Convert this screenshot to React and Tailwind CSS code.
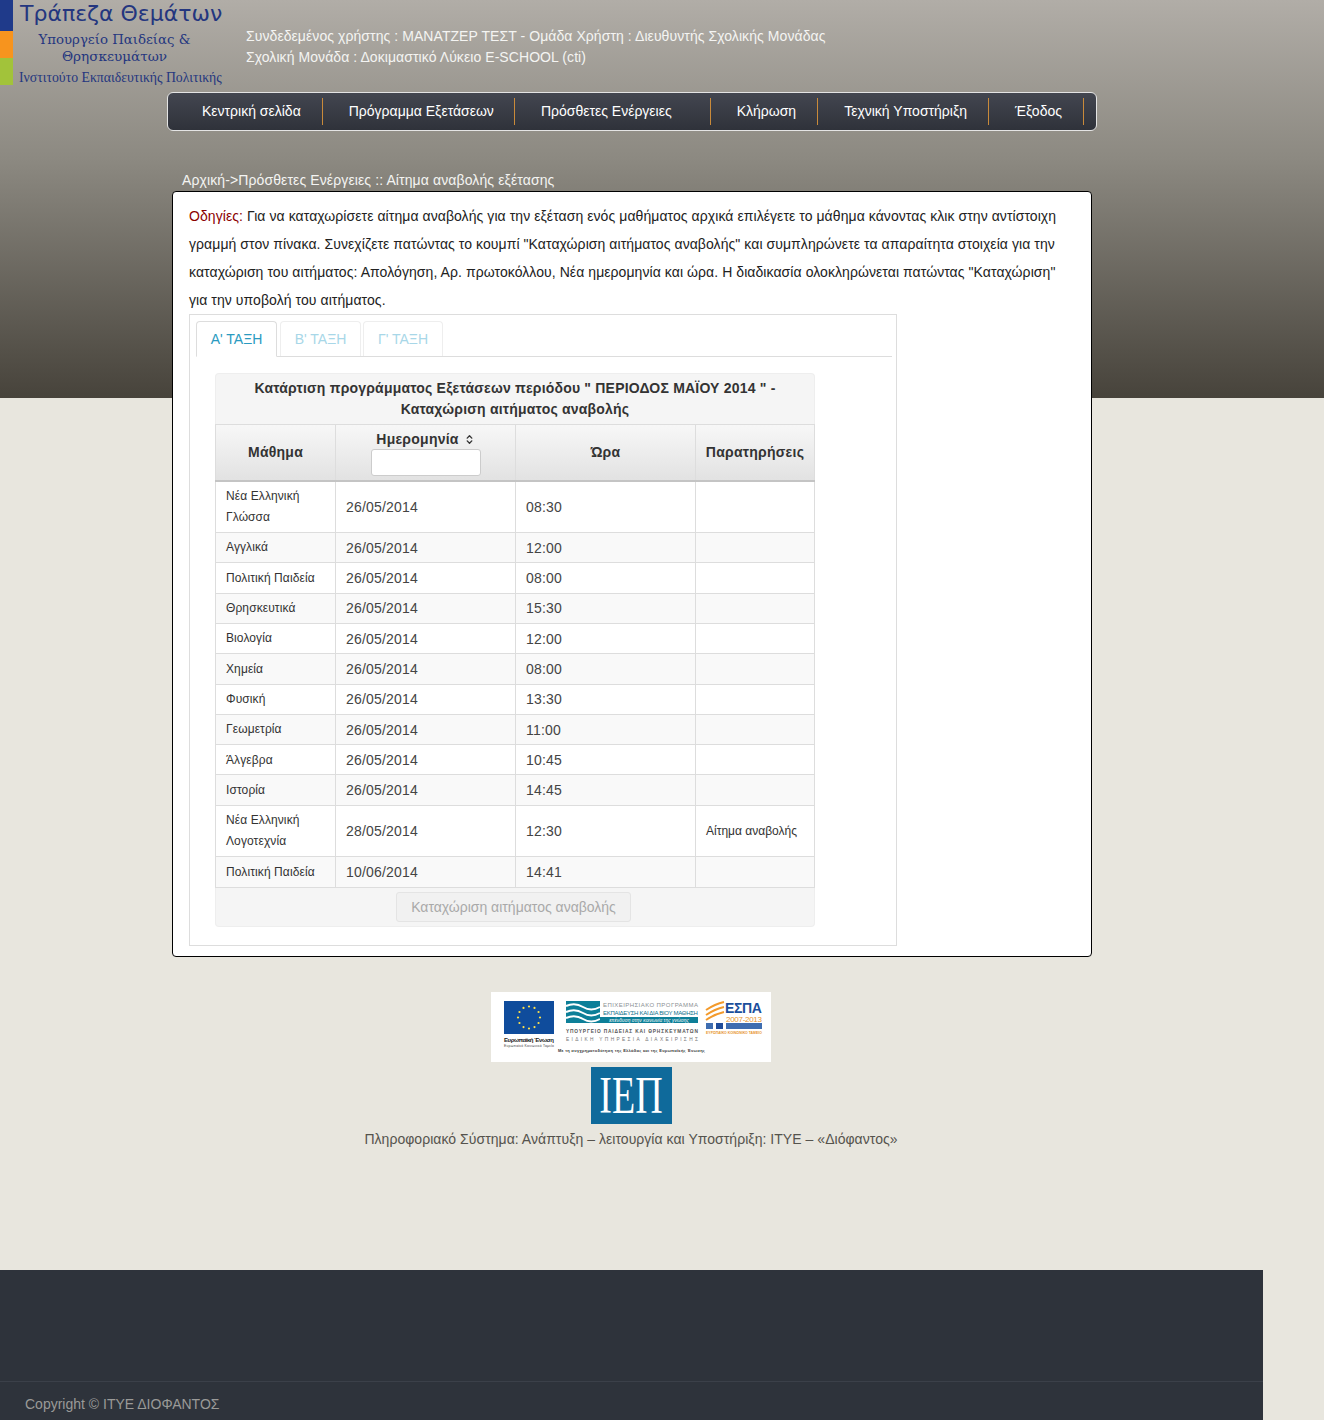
import React from "react";
import { ChevronsUpDown } from "lucide-react";

const navItems = [
  { label: "Κεντρική σελίδα", cls: "pr-[21px]" },
  { label: "Πρόγραμμα Εξετάσεων", cls: "pr-[20px]" },
  { label: "Πρόσθετες Ενέργειες", cls: "pr-[38px]" },
  { label: "Κλήρωση", cls: "pr-[21px]" },
  { label: "Τεχνική Υποστήριξη", cls: "pr-[21px]" },
  { label: "Έξοδος", cls: "pr-[21px]" },
];

// row heights and the 1px nudges keep the rounding of the original's 30.33px rows
const rows = [
  { subject: ["Νέα Ελληνική", "Γλώσσα"], date: "26/05/2014", time: "08:30", h: "h-[51px]", sub: "pt-0", val: "pt-[2px]" },
  { subject: ["Αγγλικά"], date: "26/05/2014", time: "12:00", h: "h-[30px]", sub: "pt-0", val: "pt-[2px]" },
  { subject: ["Πολιτική Παιδεία"], date: "26/05/2014", time: "08:00", h: "h-[31px]", sub: "pt-[2px]", val: "pt-[2px]" },
  { subject: ["Θρησκευτικά"], date: "26/05/2014", time: "15:30", h: "h-[30px]", sub: "pt-0", val: "pt-0" },
  { subject: ["Βιολογία"], date: "26/05/2014", time: "12:00", h: "h-[30px]", sub: "pt-0", val: "pt-[2px]" },
  { subject: ["Χημεία"], date: "26/05/2014", time: "08:00", h: "h-[31px]", sub: "pt-[2px]", val: "pt-[2px]" },
  { subject: ["Φυσική"], date: "26/05/2014", time: "13:30", h: "h-[30px]", sub: "pt-0", val: "pt-0" },
  { subject: ["Γεωμετρία"], date: "26/05/2014", time: "11:00", h: "h-[30px]", sub: "pt-0", val: "pt-[2px]" },
  { subject: ["Άλγεβρα"], date: "26/05/2014", time: "10:45", h: "h-[30px]", sub: "pt-[2px]", val: "pt-[2px]" },
  { subject: ["Ιστορία"], date: "26/05/2014", time: "14:45", h: "h-[31px]", sub: "pt-[2px]", val: "pt-[2px]" },
  { subject: ["Νέα Ελληνική", "Λογοτεχνία"], date: "28/05/2014", time: "12:30", note: "Αίτημα αναβολής", h: "h-[51px]", sub: "pt-0", val: "pt-[2px]" },
  { subject: ["Πολιτική Παιδεία"], date: "10/06/2014", time: "14:41", h: "h-[31px]", sub: "pt-[2px]", val: "pt-[2px]" },
];

const Logo = () => (
  <div className="flex w-[246px] h-[85px] shrink-0">
    <div className="flex flex-col w-[13px] h-[85px] shrink-0">
      <div className="h-[31px] bg-[#1f3a8a]"></div>
      <div className="h-[27px] bg-[#f7941e]"></div>
      <div className="h-[27px] bg-[#a2c33a]"></div>
    </div>
    <div className="w-[209px] pl-[6px] text-[#24367f] text-center whitespace-nowrap tracking-normal">
      <div className="h-[31px] pl-[1px] text-[22px] leading-[28px] font-['DejaVu_Sans',sans-serif] text-left">Τράπεζα Θεμάτων</div>
      <div className="h-[17px] text-[13.3px] leading-[17px] font-['DejaVu_Serif',serif] pr-[12px]">Υπουργείο Παιδείας &</div>
      <div className="h-[17px] text-[13.6px] leading-[17px] font-['DejaVu_Serif',serif] pr-[12px]">Θρησκευμάτων</div>
      <div className="h-[20px] pt-[3px] text-[13.75px] leading-[20px] font-['Liberation_Serif',serif] text-left">Ινστιτούτο Εκπαιδευτικής Πολιτικής</div>
    </div>
  </div>
);

const EuBanner = () => {
  const stars = Array.from({ length: 12 }, (_, i) => {
    const a = (i * Math.PI) / 6;
    return [25 + 11 * Math.cos(a), 16.5 + 11 * Math.sin(a)];
  });
  return (
    <svg width="280" height="70" viewBox="0 0 280 70" className="block">
      <rect width="280" height="70" fill="#ffffff" />
      <g transform="translate(13,9)">
        <rect width="50" height="33" fill="#0f4c9c" />
        {stars.map(([x, y], i) => (
          <circle key={i} cx={x} cy={y} r="1.1" fill="#ffe24a" />
        ))}
      </g>
      <text x="13" y="50" fontSize="6" fontWeight="700" fill="#222" fontFamily="Liberation Sans" textLength="50">Ευρωπαϊκή Ένωση</text>
      <text x="13" y="55" fontSize="3.4" fill="#444" fontFamily="Liberation Sans" textLength="50">Ευρωπαϊκό Κοινωνικό Ταμείο</text>

      <rect x="75" y="9" width="34" height="22" fill="#0d7f98" />
      <path d="M75 14 Q84 10 92 15 T109 15 M75 20 Q84 16 92 21 T109 21 M75 26 Q84 22 92 27 T109 27" stroke="#ffffff" strokeWidth="2" fill="none" />
      <text x="112" y="15" fontSize="6" fill="#8a8f93" fontFamily="Liberation Sans" textLength="95">ΕΠΙΧΕΙΡΗΣΙΑΚΟ ΠΡΟΓΡΑΜΜΑ</text>
      <text x="112" y="23" fontSize="6" fill="#0d6f8c" fontFamily="Liberation Sans" textLength="95">ΕΚΠΑΙΔΕΥΣΗ ΚΑΙ ΔΙΑ ΒΙΟΥ ΜΑΘΗΣΗ</text>
      <rect x="109" y="25" width="98" height="6" fill="#0d7f98" />
      <text x="158" y="30" textAnchor="middle" fontSize="4.8" fontStyle="italic" fill="#ffffff" fontFamily="Liberation Sans">επένδυση στην κοινωνία της γνώσης</text>
      <text x="75" y="41" fontSize="4.8" fontWeight="700" fill="#555" fontFamily="Liberation Sans" textLength="132">ΥΠΟΥΡΓΕΙΟ ΠΑΙΔΕΙΑΣ ΚΑΙ ΘΡΗΣΚΕΥΜΑΤΩΝ</text>
      <text x="75" y="49" fontSize="4.8" fill="#777" fontFamily="Liberation Sans" textLength="132">ΕΙΔΙΚΗ ΥΠΗΡΕΣΙΑ ΔΙΑΧΕΙΡΙΣΗΣ</text>
      <text x="67" y="60" fontSize="4" fontWeight="700" fill="#333" fontFamily="Liberation Sans" textLength="147">Με τη συγχρηματοδότηση της Ελλάδας και της Ευρωπαϊκής Ένωσης</text>

      <path d="M215 18 Q224 12 233 10 M215 23 Q224 17 233 15 M215 28 Q224 22 233 20" stroke="#f39a2b" strokeWidth="2" fill="none" />
      <text x="234" y="20.5" fontSize="14" fontWeight="700" fill="#1c4f9c" fontFamily="Liberation Sans" textLength="37">ΕΣΠΑ</text>
      <text x="235" y="30" fontSize="8" fill="#e8952b" fontFamily="Liberation Sans" textLength="36">2007-2013</text>
      <rect x="215" y="31" width="7" height="6" fill="#3f6db0" />
      <rect x="225" y="31" width="7" height="6" fill="#1f4c9a" />
      <rect x="235" y="31" width="36" height="6" fill="#3f6db0" />
      <text x="215" y="42" fontSize="3.4" fontWeight="700" fill="#e8952b" fontFamily="Liberation Sans" textLength="56">ΕΥΡΩΠΑΪΚΟ ΚΟΙΝΩΝΙΚΟ ΤΑΜΕΙΟ</text>
    </svg>
  );
};

export default function App() {
  return (
    <div className="h-[1420px] overflow-hidden bg-[#e8e6de] font-['Liberation_Sans',Arial,sans-serif] text-[14px] text-[#333] tracking-[0.07px]">
      <div className="bg-[linear-gradient(#b1ada7_0%,#8c8981_40%,#47433b_100%)] bg-no-repeat bg-[length:100%_398px] bg-top">
        <div className="w-[1263px]">
          <div className="flex h-[92px]">
            <Logo />
            <div className="pt-[26px] text-[#f4f4f2] leading-[21px]">
              <div>Συνδεδεμένος χρήστης : ΜΑΝΑΤΖΕΡ ΤΕΣΤ - Ομάδα Χρήστη : Διευθυντής Σχολικής Μονάδας</div>
              <div>Σχολική Μονάδα : Δοκιμαστικό Λύκειο E-SCHOOL (cti)</div>
            </div>
          </div>

          <nav className="ml-[167px] w-[930px] h-[39px] flex items-center pl-[34px] rounded-[6px] border border-[#e4e4e4] bg-[linear-gradient(#434650,#2f323a)] text-white tracking-normal">
            {navItems.map((item) => (
              <React.Fragment key={item.label}>
                <span className={"whitespace-nowrap " + item.cls}>{item.label}</span>
                <div className="w-[1px] shrink-0 h-[27px] bg-[#c98a3a] mr-[26px]"></div>
              </React.Fragment>
            ))}
          </nav>

          <div className="w-[920px] ml-[172px] mt-[39px]">
            <div className="pl-[10px] h-[21px] leading-[20px] text-[#f4f4f2] tracking-[0.11px]">Αρχική-&gt;Πρόσθετες Ενέργειες :: Αίτημα αναβολής εξέτασης</div>

            <div className="bg-white border border-black rounded-[4px] px-4 pt-[10px] pb-[10px]">
              <p className="leading-[28px] text-[#222]">
                <span className="text-[#8b0000]">Οδηγίες:</span> Για να καταχωρίσετε αίτημα αναβολής για την εξέταση ενός μαθήματος αρχικά επιλέγετε το μάθημα κάνοντας κλικ στην αντίστοιχη γραμμή στον πίνακα. Συνεχίζετε πατώντας το κουμπί "Καταχώριση αιτήματος αναβολής" και συμπληρώνετε τα απαραίτητα στοιχεία για την καταχώριση του αιτήματος: Απολόγηση, Αρ. πρωτοκόλλου, Νέα ημερομηνία και ώρα. Η διαδικασία ολοκληρώνεται πατώντας "Καταχώριση" για την υποβολή του αιτήματος.
              </p>

              <div className="w-[708px] h-[632px] border border-[#ddd] pt-[6px] pl-[6px]">
                <div className="flex w-[696px] h-[36px] border-b border-[#ddd]">
                  <div className="w-[81px] h-[36px] flex items-center justify-center bg-white border border-[#ddd] border-b-white rounded-t-[4px] text-[#2a9ac0] tracking-normal">Α' ΤΑΞΗ</div>
                  <div className="w-[81px] ml-[3px] h-[35px] flex items-center justify-center border border-[#eee] border-b-0 rounded-t-[4px] text-[#a8d7e8] tracking-normal">Β' ΤΑΞΗ</div>
                  <div className="w-[80px] ml-[2px] h-[35px] flex items-center justify-center border border-[#eee] border-b-0 rounded-t-[4px] text-[#a8d7e8] tracking-normal">Γ' ΤΑΞΗ</div>
                </div>

                <div className="w-[600px] ml-[19px] mt-[16px]">
                  <div className="h-[51px] bg-[#f5f5f5] rounded-t-[4px] border border-[#eee] border-b-0 pt-[4px] text-center font-bold leading-[21px] text-[#333] tracking-[0.2px]">
                    Κατάρτιση προγράμματος Εξετάσεων περιόδου " ΠΕΡΙΟΔΟΣ ΜΑΪΟΥ 2014 " -<br />
                    Καταχώριση αιτήματος αναβολής
                  </div>
                  <table className="w-[599px] table-fixed border-collapse">
                    <colgroup>
                      <col className="w-[120px]" />
                      <col className="w-[180px]" />
                      <col className="w-[180px]" />
                      <col className="w-[119px]" />
                    </colgroup>
                    <thead>
                      <tr className="h-[55px] bg-[linear-gradient(#f7f7f7,#e2e2e2)] border-b-2 border-[#c4c4c4] tracking-[0.25px]">
                        <th className="border border-[#ddd] border-b-[#c4c4c4] font-bold">Μάθημα</th>
                        <th className="border border-[#ddd] border-b-[#c4c4c4] font-bold align-top pt-[5px] pb-[4px]">
                          <div className="flex justify-center items-center gap-[5px] h-[18px]">
                            Ημερομηνία <ChevronsUpDown size={11} strokeWidth={3} />
                          </div>
                          <input className="block mx-auto mt-[1px] w-[110px] h-[27px] bg-white border border-[#ccc] rounded-[3px]" />
                        </th>
                        <th className="border border-[#ddd] border-b-[#c4c4c4] font-bold">Ώρα</th>
                        <th className="border border-[#ddd] border-b-[#c4c4c4] font-bold whitespace-nowrap">Παρατηρήσεις</th>
                      </tr>
                    </thead>
                    <tbody>
                      {rows.map((row, i) => (
                        <tr key={i} className={row.h + (i % 2 === 1 ? " bg-[#f9f9f9]" : " bg-white")}>
                          <td className={"border border-[#ddd] px-[10px] text-[12px] leading-[21px] tracking-[0.1px] " + row.sub}>
                            {row.subject.map((line) => (
                              <div key={line}>{line}</div>
                            ))}
                          </td>
                          <td className={"border border-[#ddd] px-[10px] text-[#444] tracking-[0.2px] " + row.val}>{row.date}</td>
                          <td className={"border border-[#ddd] px-[10px] text-[#444] tracking-[0.2px] " + row.val}>{row.time}</td>
                          <td className="border border-[#ddd] px-[10px] p-0 text-[12px] whitespace-nowrap tracking-normal">{row.note}</td>
                        </tr>
                      ))}
                    </tbody>
                  </table>
                  <div className="h-[39px] bg-[#f5f5f5] rounded-b-[4px] border border-[#eee] border-t-0 flex justify-center items-start pt-[4px] pr-[3px]">
                    <button className="w-[235px] h-[30px] pt-[2px] bg-[#f1f1f1] border border-[#e4e4e4] rounded-[3px] text-[#a9a9a9] tracking-normal">Καταχώριση αιτήματος αναβολής</button>
                  </div>
                </div>
              </div>
            </div>

            <div className="mt-[35px] pr-[2px] flex flex-col items-center">
              <EuBanner />
              <div className="mt-[5px] w-[81px] h-[57px] bg-[#0f6a9b] flex items-center justify-center text-white font-['Liberation_Serif',serif] text-[38px] leading-[57px] tracking-normal">
                <span className="inline-block scale-y-[1.4]">ΙΕΠ</span>
              </div>
              <div className="mt-[5px] h-[20px] leading-[20px] text-[#55534d] tracking-[0.04px]">Πληροφοριακό Σύστημα: Ανάπτυξη – λειτουργία και Υποστήριξη: ΙΤΥΕ – «Διόφαντος»</div>
            </div>
          </div>

          <footer className="mt-[121px] h-[150px] bg-[#2e333b]">
            <div className="h-[112px] border-b border-[#3b4049]"></div>
            <div className="pl-[25px] pt-[12px] text-[#9a9a98] tracking-normal">Copyright © ΙΤΥΕ ΔΙΟΦΑΝΤΟΣ</div>
          </footer>
        </div>
      </div>
    </div>
  );
}
